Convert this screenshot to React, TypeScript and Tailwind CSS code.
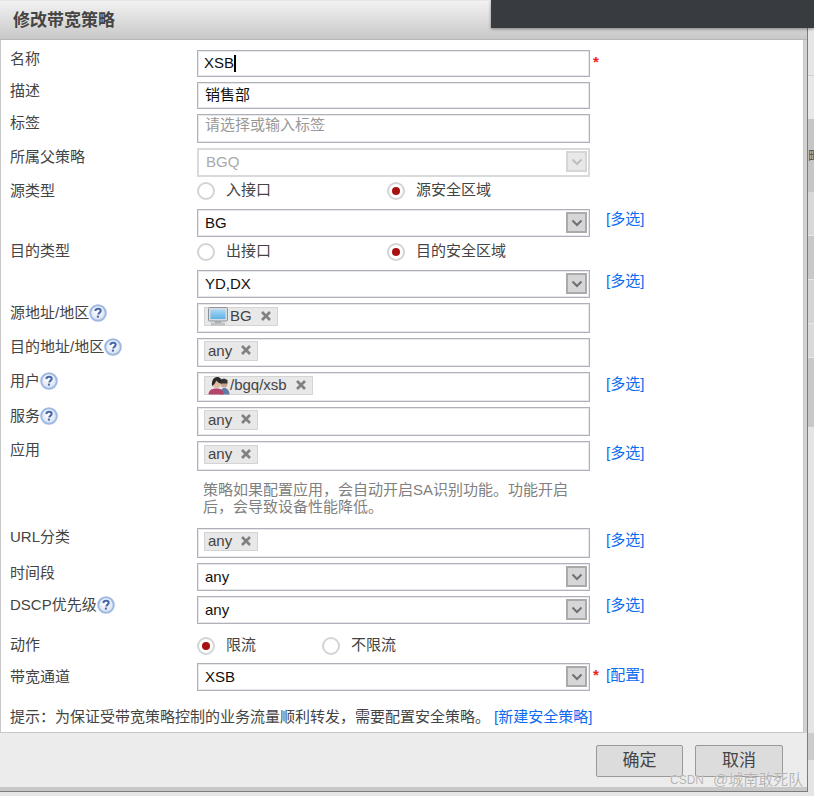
import type { ReactNode } from 'react';

const font = "font-['Liberation_Sans','Noto_Sans_CJK_SC',sans-serif]";

function HelpIcon() {
  return (
    <svg width="18" height="18" viewBox="0 0 18 18" className="shrink-0">
      <defs>
        <radialGradient id="helpFill" cx="45%" cy="40%" r="60%">
          <stop offset="0%" stopColor="#ffffff" />
          <stop offset="100%" stopColor="#d5dfef" />
        </radialGradient>
      </defs>
      <circle cx="9" cy="9" r="7.800" fill="url(#helpFill)" stroke="#9db9e4" strokeWidth="2" />
      <path d="M6.300 7c.2-1.500 1.300-2.200 2.800-2.200 1.500 0 2.600.8 2.600 2 0 1.100-.7 1.600-1.400 2.100-.6.4-.9.800-.9 1.500" fill="none" stroke="#4565a5" strokeWidth="2" />
      <rect x="7.900" y="11.600" width="2" height="2" fill="#4565a5" />
    </svg>
  );
}

function Chevron({ disabled }: { disabled?: boolean }) {
  return (
    <div
      className={`absolute right-[3px] top-[3px] flex h-[21px] w-[21px] items-center justify-center border-2 ${
        disabled ? 'border-[#d6d6d6] bg-[#e8e8e8]' : 'border-[#aaaaaa] bg-[#d6d6d8]'
      }`}
    >
      <svg width="12" height="8" viewBox="0 0 12 8">
        <path d="M1.500 1.500 6 6l4.500-4.500" fill="none" stroke={disabled ? '#bdbdbd' : '#707070'} strokeWidth="2" />
      </svg>
    </div>
  );
}

function Monitor() {
  return (
    <svg width="20" height="19" viewBox="0 0 20 19" className="mr-[2px] shrink-0">
      <defs>
        <linearGradient id="screen" x1="0" y1="0" x2="0" y2="1">
          <stop offset="0%" stopColor="#a9daf5" />
          <stop offset="100%" stopColor="#5fb0e4" />
        </linearGradient>
      </defs>
      <rect x="0.500" y="0.500" width="19" height="13.500" rx="1" fill="#d8dce0" stroke="#8f9499" />
      <rect x="2.500" y="2.500" width="15" height="9.500" fill="url(#screen)" />
      <rect x="7" y="14" width="6" height="2" fill="#a9adb2" />
      <rect x="3.500" y="16" width="13" height="2" fill="#c9ccd0" stroke="#a0a4a8" strokeWidth="0.500" />
    </svg>
  );
}

function Users() {
  return (
    <svg width="22" height="19" viewBox="0 0 22 19" className="shrink-0">
      <circle cx="16" cy="8" r="3.500" fill="#c9a58c" />
      <path d="M12 4.500c1-2 6-2.500 7.500 0v3h-7.500z" fill="#333333" />
      <path d="M12 18.500c0-4 2-6.500 4.500-6.500s5 2.500 5 6.500z" fill="#5d7da6" />
      <circle cx="8.500" cy="8" r="4" fill="#e3b9a0" />
      <path d="M4 10c-.5-5.500 1.500-9 5-9s5 2.500 4.500 6.500c-2 0-4-1-5-3-1 2-2.500 4.500-4.500 5.500z" fill="#2a2a2a" />
      <path d="M0.500 18.500c0-4 3-6 8-6s7 2 7 6z" fill="#b3456a" />
    </svg>
  );
}

function Tag({ icon, label, tall }: { icon?: ReactNode; label: string; tall?: boolean }) {
  return (
    <span
      className={`inline-flex items-center border border-[#d4d4d4] bg-[#e8e8e8] pl-[3px] text-[15px] text-[#444444] ${
        tall ? 'h-[19px]' : 'h-[20px]'
      }`}
    >
      {icon}
      <span>{label}</span>
      <svg width="10" height="10" viewBox="0 0 10 10" className="ml-[9px] mr-[6px] -translate-y-[1px]">
        <path d="M1 1l8 8M9 1l-8 8" stroke="#808080" strokeWidth="2.600" />
      </svg>
    </span>
  );
}

function Link({ children }: { children: ReactNode }) {
  return <span className="text-[15px] text-[#0a6cf0]">{children}</span>;
}

function Row({
  label,
  help,
  top,
  height,
  labelOffset,
  extra,
  extraOffset = -3,
  star,
  children,
}: {
  label: string;
  help?: boolean;
  top: number;
  height: number;
  labelOffset: number;
  extra?: string;
  extraOffset?: number;
  star?: boolean;
  children?: ReactNode;
}) {
  return (
    <div className="flex items-start" style={{ marginTop: top, height }}>
      <div
        className="flex w-[196px] shrink-0 items-center pl-[9px] text-[15px] leading-[18px] text-[#444444]"
        style={{ paddingTop: labelOffset }}
      >
        {label}
        {help && <HelpIcon />}
      </div>
      <div className="relative w-[393px] shrink-0" style={{ height }}>
        {children}
      </div>
      <div className="w-[16px] shrink-0 pl-[3px] pt-[3px] text-[15px] font-bold leading-[18px] text-[#ee2222]">
        {star ? '*' : ''}
      </div>
      {extra && (
        <div className="leading-[18px]" style={{ marginTop: height / 2 - 9 + extraOffset }}>
          <Link>{extra}</Link>
        </div>
      )}
    </div>
  );
}

const fieldBorder = 'border border-[#b0b0b8] shadow-[inset_0_0_0_1px_#e8e8ec]';

function Box({ value, dim, gray }: { value?: string; dim?: boolean; gray?: boolean }) {
  return (
    <div
      className={`flex h-full items-center bg-white pl-[7px] pr-[6px] text-[15px] ${
        dim ? 'border-2 border-[#dadada]' : fieldBorder
      } ${gray ? 'text-[#aaaaaa]' : 'text-[#111111]'}`}
    >
      {value}
    </div>
  );
}

function Select({ value, disabled }: { value: string; disabled?: boolean }) {
  return (
    <>
      <Box value={value} dim={disabled} gray={disabled} />
      <Chevron disabled={disabled} />
    </>
  );
}

function TagBox({ tall, children }: { tall?: boolean; children: ReactNode }) {
  return (
    <div className={`flex h-full items-start bg-white pl-[6px] ${fieldBorder} ${tall ? 'pt-[3px]' : 'pt-[2px]'}`}>
      {children}
    </div>
  );
}

function Radio({ on, label, width }: { on?: boolean; label: string; width: number }) {
  return (
    <div className="flex items-center text-[15px] text-[#444444]" style={{ width }}>
      <span className="flex h-[18px] w-[18px] shrink-0 items-center justify-center rounded-full border-2 border-[#d4d4d4] bg-white">
        {on && <span className="h-[8px] w-[8px] rounded-full bg-[#a80f0f]" />}
      </span>
      <span className="ml-[11px]">{label}</span>
    </div>
  );
}

function RadioPair({ children }: { children: ReactNode }) {
  return <div className="flex h-full items-center">{children}</div>;
}

export default function App() {
  return (
    <div className={`${font} relative flex h-[796px] w-[814px] items-start overflow-hidden bg-[#e6e6e6]`}>
      <div className="h-[792px] w-[808px] shrink-0 border-r border-b border-[#7c7c7c] bg-[#ececec]">
        {/* Title bar */}
        <div className="h-[40px] border-t border-b border-[#e6e6e6] border-b-[#b8b8b8] bg-gradient-to-b from-[#f2f2f2] to-[#c8c8c8] pl-[13px] pt-[10px] text-[17px] font-bold leading-[20px] text-[#444444]">
          修改带宽策略
        </div>

        {/* Form */}
        <div className="h-[693px] bg-[#d2d2d2]">
          <div className="h-full w-[804px] border border-t-0 border-[#c8c8c8] bg-white pt-[10px]">
            <Row label="名称" top={0} height={27} labelOffset={0} star>
              <div className={`flex h-full items-center bg-white px-[6px] text-[15px] text-[#111111] ${fieldBorder}`}>
                XSB
                <span className="h-[17px] w-[2px] bg-black" />
              </div>
            </Row>
            <Row label="描述" top={5} height={27} labelOffset={0}>
              <Box value="销售部" />
            </Row>
            <Row label="标签" top={5} height={29} labelOffset={0}>
              <div className={`h-full bg-white px-[7px] pt-[1px] text-[15px] leading-[18px] text-[#999999] ${fieldBorder}`}>
                请选择或输入标签
              </div>
            </Row>
            <Row label="所属父策略" top={5} height={29} labelOffset={0}>
              <Select value="BGQ" disabled />
            </Row>
            <Row label="源类型" top={0} height={27} labelOffset={5}>
              <RadioPair>
                <Radio label="入接口" width={190} />
                <Radio on label="源安全区域" width={150} />
              </RadioPair>
            </Row>
            <Row label="" top={5} height={28} labelOffset={0} extra="[多选]" extraOffset={-4}>
              <Select value="BG" />
            </Row>
            <Row label="目的类型" top={1} height={27} labelOffset={4}>
              <RadioPair>
                <Radio label="出接口" width={190} />
                <Radio on label="目的安全区域" width={170} />
              </RadioPair>
            </Row>
            <Row label="" top={5} height={28} labelOffset={0} extra="[多选]">
              <Select value="YD,DX" />
            </Row>
            <Row label="源地址/地区" help top={5} height={30} labelOffset={1}>
              <TagBox tall>
                <Tag tall icon={<Monitor />} label="BG" />
              </TagBox>
            </Row>
            <Row label="目的地址/地区" help top={5} height={29} labelOffset={0}>
              <TagBox>
                <Tag label="any" />
              </TagBox>
            </Row>
            <Row label="用户" help top={5} height={30} labelOffset={0} extra="[多选]">
              <TagBox tall>
                <Tag tall icon={<Users />} label="/bgq/xsb" />
              </TagBox>
            </Row>
            <Row label="服务" help top={5} height={29} labelOffset={0}>
              <TagBox>
                <Tag label="any" />
              </TagBox>
            </Row>
            <Row label="应用" top={5} height={30} labelOffset={0} extra="[多选]">
              <TagBox tall>
                <Tag tall label="any" />
              </TagBox>
            </Row>
            <div className="ml-[202px] mt-[10px] h-[35px] w-[375px] text-[15px] leading-[17px] text-[#808080]">
              策略如果配置应用，会自动开启SA识别功能。功能开启后，会导致设备性能降低。
            </div>
            <Row label="URL分类" top={12} height={30} labelOffset={0} extra="[多选]">
              <TagBox tall>
                <Tag tall label="any" />
              </TagBox>
            </Row>
            <Row label="时间段" top={5} height={28} labelOffset={1}>
              <Select value="any" />
            </Row>
            <Row label="DSCP优先级" help top={5} height={28} labelOffset={0} extra="[多选]" extraOffset={-5}>
              <Select value="any" />
            </Row>
            <Row label="动作" top={8} height={27} labelOffset={4}>
              <RadioPair>
                <Radio on label="限流" width={125} />
                <Radio label="不限流" width={120} />
              </RadioPair>
            </Row>
            <Row label="带宽通道" top={4} height={28} labelOffset={5} star extra="[配置]" extraOffset={-2}>
              <Select value="XSB" />
            </Row>
            <div className="mt-[17px] pl-[9px] text-[15px] leading-[18px] text-[#444444]">
              提示：为保证受带宽策略控制的业务流量顺利转发，需要配置安全策略。
              <span className="ml-[4px]">
                <Link>[新建安全策略]</Link>
              </span>
            </div>
          </div>
        </div>

        {/* Footer */}
        <div className="h-[58px] border-b-4 border-[#c8c8c8] pt-[12px]">
          <div className="flex justify-end gap-[12px] pr-[24px]">
            <button className="h-[32px] w-[87px] rounded-[2px] border border-[#999999] bg-[#dcdcdc] text-[17px] text-[#444444]">
              确定
            </button>
            <button className="h-[32px] w-[88px] rounded-[2px] border border-[#999999] bg-[#dcdcdc] text-[17px] text-[#444444]">
              取消
            </button>
          </div>
        </div>
      </div>

      {/* Table rows of the page behind the dialog */}
      <div className="w-[6px] shrink-0 overflow-hidden pt-[28px]">
        <div className="h-[48px] border-b border-[#cfcfcf] bg-[#e6e6e6]" />
        <div className="h-[43px] bg-[#e8e8e8]" />
        <div className="h-[73px] whitespace-nowrap bg-[#c6c6c6] pt-[28px] text-[14px] leading-[18px] text-[#555555]">略</div>
        <div className="h-[44px] border-b border-[#e8e8e8] bg-[#d8d8d8]" />
        <div className="h-[44px] border-b border-[#e8e8e8] bg-[#c8c8c8]" />
        <div className="h-[44px] border-b border-[#e8e8e8] bg-[#d4d4d4]" />
        <div className="h-[34px] border-b border-[#e8e8e8] bg-[#dadada]" />
        <div className="h-[69px] bg-[#c8c8c8]" />
        <div className="h-[306px] bg-[#e4e4e4]" />
        <div className="h-[27px] bg-[#cccccc]" />
        <div className="h-[36px] bg-[#e4e4e4]" />
      </div>

      {/* Dark bar over the dialog corner */}
      <div className="absolute right-0 top-0 h-[28px] w-[323px] bg-[#383c40] shadow-[0_1px_3px_rgba(0,0,0,0.4)]" />

      {/* Watermark */}
      <div className="absolute left-[670px] top-[771px] flex items-center leading-[18px] text-[#b4b4b4] [text-shadow:0_0_1px_#ffffff]">
        <span className="text-[12px]">CSDN</span>
        <span className="ml-[9px] text-[15px]">@城南敢死队</span>
      </div>
    </div>
  );
}
